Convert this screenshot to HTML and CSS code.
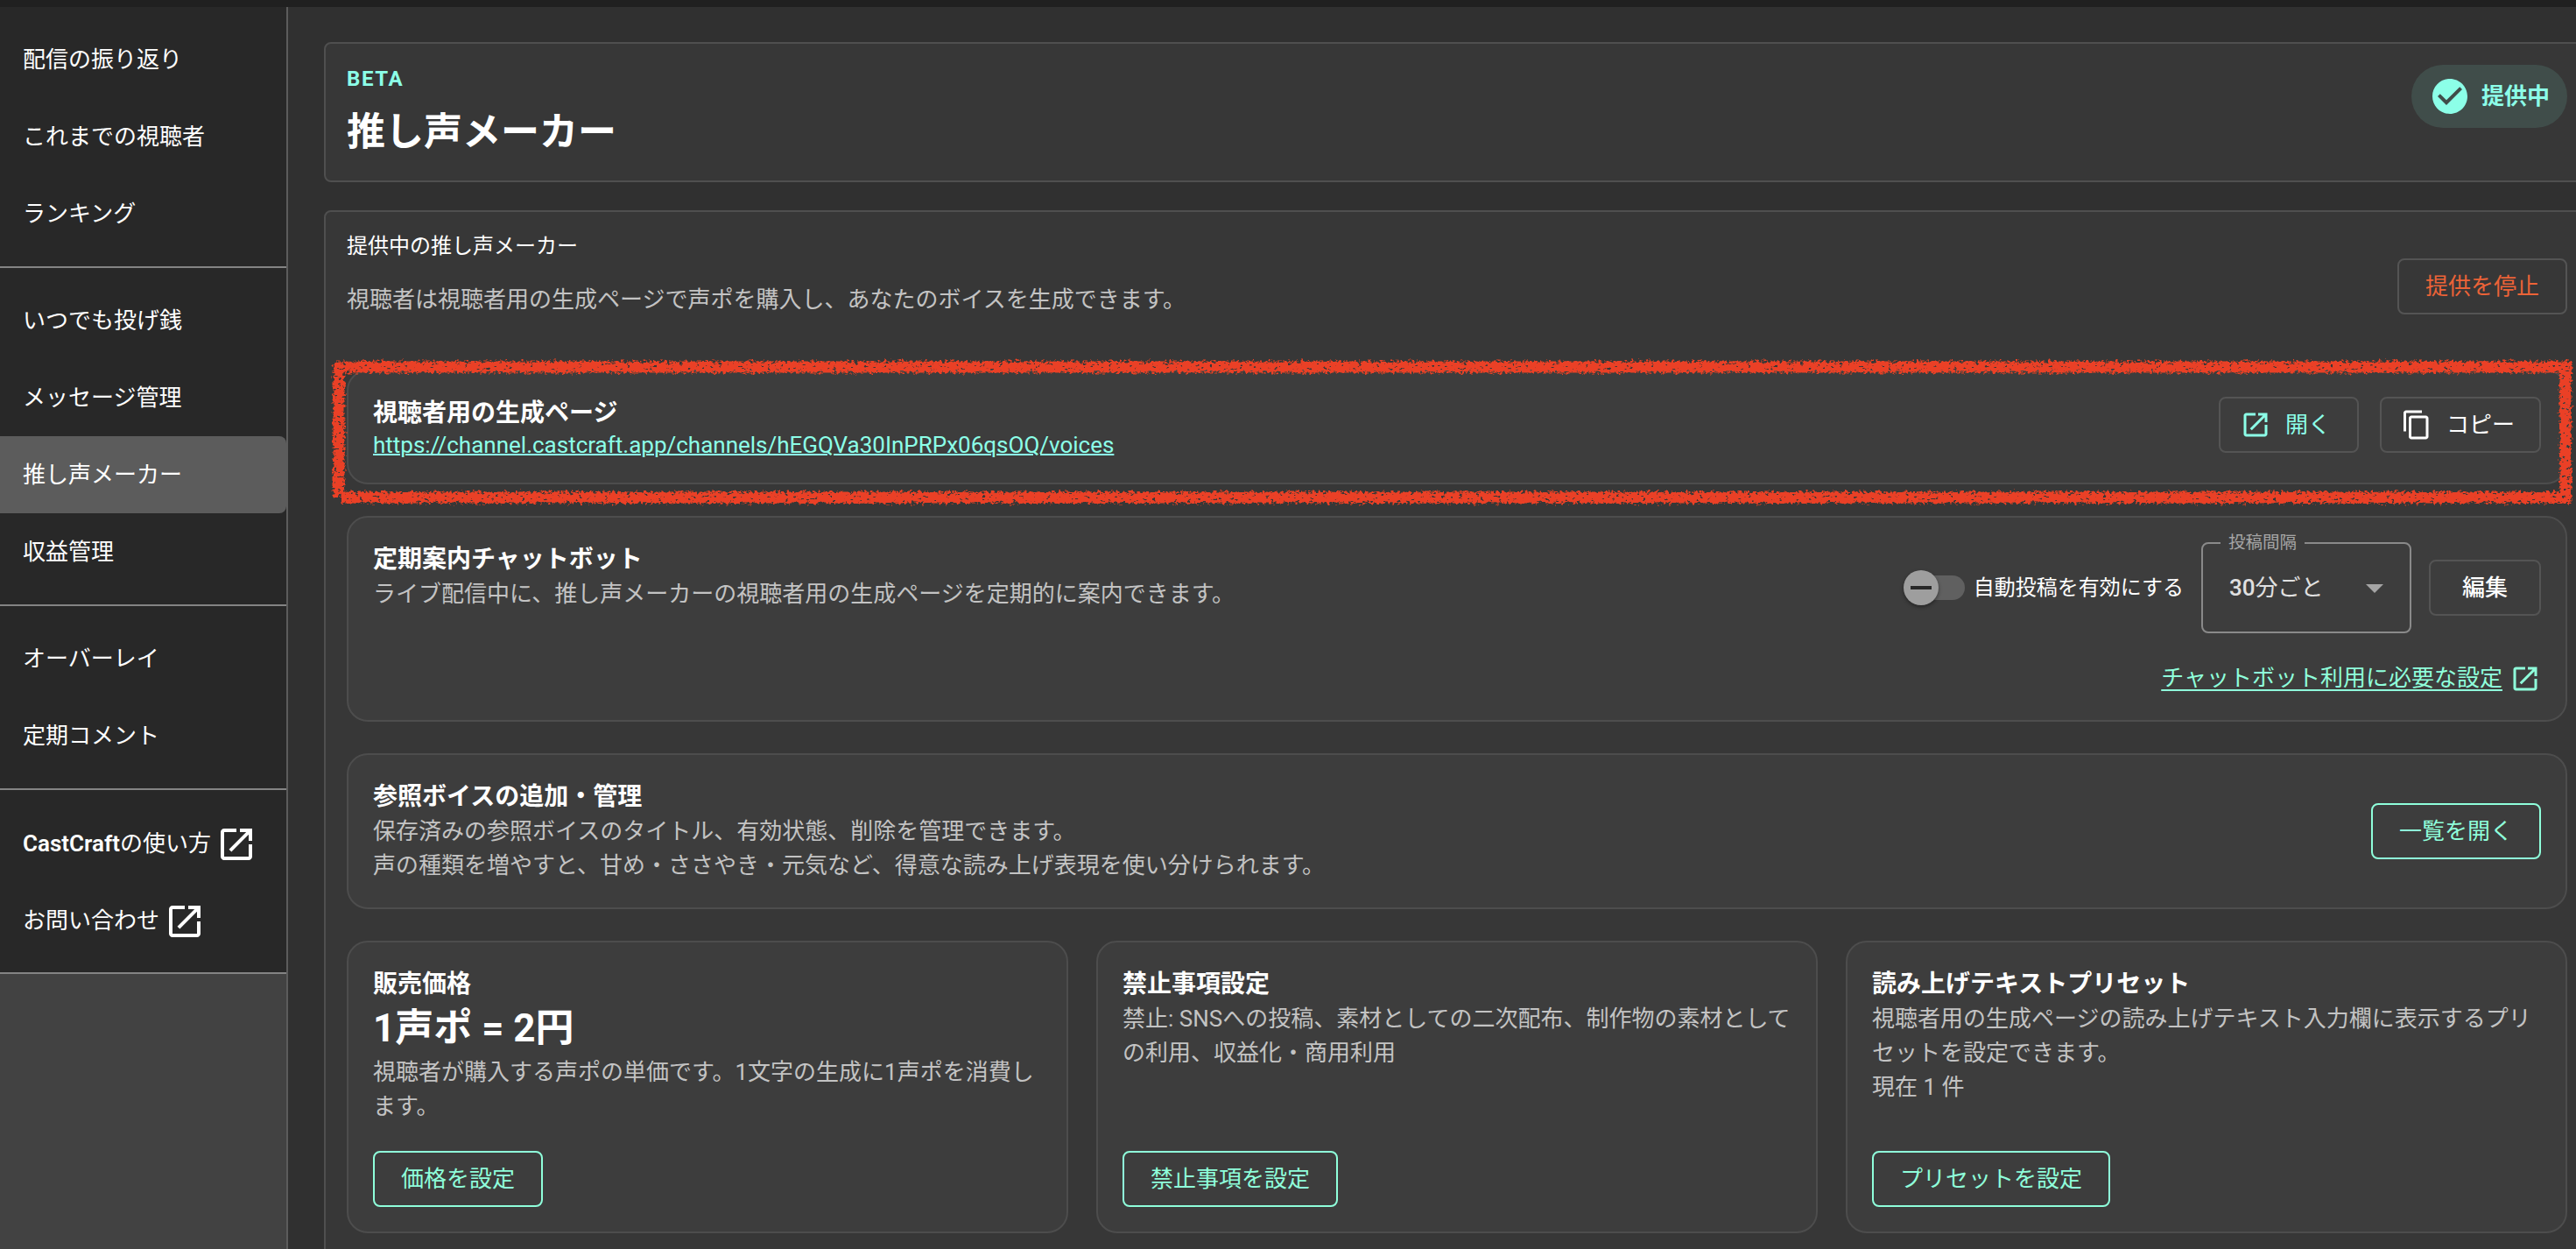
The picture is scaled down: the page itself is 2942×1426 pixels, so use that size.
FILE: index.html
```html
<!DOCTYPE html>
<html lang="ja">
<head>
<meta charset="UTF-8">
<title>推し声メーカー</title>
<meta name="viewport" content="width=device-width, initial-scale=1.0">
<link rel="stylesheet" href="styles.css">
</head>

<body>

<!-- ICONS -->
<svg width="0" height="0" class="defs">
    <symbol id="open" viewBox="0 0 24 24">
        <path d="M19 19H5V5h7V3H5c-1.11 0-2 .9-2 2v14c0 1.1.89 2 2 2h14c1.1 0 2-.9 2-2v-7h-2v7zM14 3v2h3.59l-9.83 9.83 1.41 1.41L19 6.41V10h2V3h-7z"/>
    </symbol>
    <symbol id="copy" viewBox="0 0 24 24">
        <path d="M16 1H4c-1.1 0-2 .9-2 2v14h2V3h12V1zm3 4H8c-1.1 0-2 .9-2 2v14c0 1.1.9 2 2 2h11c1.1 0 2-.9 2-2V7c0-1.1-.9-2-2-2zm0 16H8V7h11v14z"/>
    </symbol>
    <symbol id="check" viewBox="0 0 24 24">
        <path d="M12 2C6.48 2 2 6.48 2 12s4.48 10 10 10 10-4.48 10-10S17.52 2 12 2zm-2 15l-5-5 1.41-1.41L10 14.17l7.59-7.59L19 8l-9 9z"/>
    </symbol>
</svg>

<div class="topbar"></div>

<div class="layout">

<!-- SIDEBAR -->
<nav class="sidebar">
    <div class="group">
        <a class="item">配信の振り返り</a>
        <a class="item">これまでの視聴者</a>
        <a class="item">ランキング</a>
    </div>
    <div class="group">
        <a class="item">いつでも投げ銭</a>
        <a class="item">メッセージ管理</a>
        <a class="item active">推し声メーカー</a>
        <a class="item">収益管理</a>
    </div>
    <div class="group">
        <a class="item">オーバーレイ</a>
        <a class="item">定期コメント</a>
    </div>
    <div class="group links">
        <a class="item"><span><b>CastCraft</b>の使い方</span><svg class="icon-lg"><use href="#open"/></svg></a>
        <a class="item">お問い合わせ<svg class="icon-lg"><use href="#open"/></svg></a>
    </div>
</nav>

<main class="main">

<section class="panel title-panel">
    <div>
        <div class="beta">BETA</div>
        <h1 class="title">推し声メーカー</h1>
    </div>
    <div class="chip"><svg class="icon-lg"><use href="#check"/></svg>提供中</div>
</section>

<section class="panel">

    <div class="head">
        <div class="head-text">
            <h2 class="head-title">提供中の推し声メーカー</h2>
            <p class="desc">視聴者は視聴者用の生成ページで声ポを購入し、あなたのボイスを生成できます。</p>
        </div>
        <button class="btn danger">提供を停止</button>
    </div>

    <!-- URL -->
    <div class="card url-card">
        <div>
            <h3 class="card-title">視聴者用の生成ページ</h3>
            <a class="url">https://channel.castcraft.app/channels/hEGQVa30InPRPx06qsOQ/voices</a>
        </div>
        <div class="actions">
            <button class="btn with-icon mint"><svg class="icon"><use href="#open"/></svg>開く</button>
            <button class="btn with-icon copy"><svg class="icon"><use href="#copy"/></svg>コピー</button>
        </div>
        <svg class="marker" viewBox="0 0 2568 176">
            <filter id="crayon" x="0" y="0" width="2568" height="176" filterUnits="userSpaceOnUse">
                <feTurbulence type="fractalNoise" baseFrequency="0.3" numOctaves="2" seed="4" result="noise"/>
                <feDisplacementMap in="SourceGraphic" in2="noise" scale="9" xChannelSelector="R" yChannelSelector="G" result="rough"/>
                <feTurbulence type="fractalNoise" baseFrequency="0.2 0.35" numOctaves="2" seed="9"/>
                <feColorMatrix values="0 0 0 0 0  0 0 0 0 0  0 0 0 0 0  -12 0 0 0 8.8" result="holes"/>
                <feComposite in="rough" in2="holes" operator="in"/>
            </filter>
            <g filter="url(#crayon)">
                <path d="M6 13H2560M2554 10V168M14 162H2558M11 9V161"/>
            </g>
        </svg>
    </div>

    <!-- CHATBOT -->
    <div class="card bot-card">
        <div>
            <h3 class="card-title">定期案内チャットボット</h3>
            <p class="desc">ライブ配信中に、推し声メーカーの視聴者用の生成ページを定期的に案内できます。</p>
        </div>
        <div class="bot-side">
            <div class="controls">
                <div class="switch">
                    <span class="track"><span class="thumb"></span></span>
                    自動投稿を有効にする
                </div>
                <fieldset class="select">
                    <legend>投稿間隔</legend>
                    <div class="select-value"><span><b>30</b>分ごと</span><span class="arrow"></span></div>
                </fieldset>
                <button class="btn edit">編集</button>
            </div>
            <div class="help"><a>チャットボット利用に必要な設定</a><svg class="icon"><use href="#open"/></svg></div>
        </div>
    </div>

    <!-- VOICES -->
    <div class="card voice-card">
        <div>
            <h3 class="card-title">参照ボイスの追加・管理</h3>
            <p class="desc">保存済みの参照ボイスのタイトル、有効状態、削除を管理できます。<br>声の種類を増やすと、甘め・ささやき・元気など、得意な読み上げ表現を使い分けられます。</p>
        </div>
        <button class="btn primary">一覧を開く</button>
    </div>

    <div class="grid">
        <div class="card tile">
            <h3 class="card-title">販売価格</h3>
            <div class="price">1声ポ = 2円</div>
            <p class="desc">視聴者が購入する声ポの単価です。1文字の生成に1声ポを消費します。</p>
            <button class="btn primary">価格を設定</button>
        </div>
        <div class="card tile">
            <h3 class="card-title">禁止事項設定</h3>
            <p class="desc">禁止: SNSへの投稿、素材としての二次配布、制作物の素材としての利用、収益化・商用利用</p>
            <button class="btn primary">禁止事項を設定</button>
        </div>
        <div class="card tile">
            <h3 class="card-title">読み上げテキストプリセット</h3>
            <p class="desc">視聴者用の生成ページの読み上げテキスト入力欄に表示するプリセットを設定できます。<br>現在 1 件</p>
            <button class="btn primary">プリセットを設定</button>
        </div>
    </div>

</section>

</main>
</div>

</body>
</html>
```
FILE: styles.css
```css
* {
    box-sizing: border-box;
}

body {
    margin: 0;
    height: 1426px;
    overflow: hidden;
    font-family: Roboto, "Noto Sans CJK JP", sans-serif;
    font-size: 26px;
    line-height: 39px;
    color: #fff;
    background: #303030;
}

h1, h2, h3, p {
    margin: 0;
}

svg {
    fill: currentColor;
    flex-shrink: 0;
}

.defs {
    display: none;
}

.icon {
    width: 36px;
    height: 36px;
}

.icon-lg {
    width: 48px;
    height: 48px;
}

.topbar {
    height: 8px;
    background: #202020;
}

.layout {
    display: flex;
    height: 1418px;
}

/* SIDEBAR */
.sidebar {
    width: 329px;
    flex-shrink: 0;
    background: #424242;
    border-right: 2px solid #5c5c5c;
}

.group {
    padding: 16px 0;
    background: #282828;
    border-bottom: 2px solid #848484;
}

.item {
    display: flex;
    align-items: center;
    gap: 5px;
    height: 88px;
    padding-left: 26px;
}

.item b {
    font-weight: 600;
}

.links .item {
    padding-top: 3px;
}

.item.active {
    background: #5c5c5c;
    border-radius: 0 8px 8px 0;
}

/* MAIN */
.main {
    flex: 1;
    min-width: 0;
    overflow: hidden;
    display: flex;
    flex-direction: column;
    gap: 32px;
    padding: 40px 0 0 41px;
}

.panel {
    width: 2588px;
    flex-shrink: 0;
    padding: 24px;
    background: #373737;
    border: 2px solid #4f4f4f;
    border-radius: 8px;
}

.title-panel {
    display: flex;
    justify-content: space-between;
    align-items: flex-start;
    height: 160px;
}

.beta {
    padding-top: 1px;
    font-size: 24px;
    line-height: 31px;
    font-weight: 700;
    letter-spacing: 1.6px;
    color: #8cffe8;
}

.title {
    margin-top: 12px;
    font-size: 44px;
    line-height: 66px;
}

.chip {
    display: flex;
    align-items: center;
    gap: 12px;
    height: 72px;
    padding: 0 20px;
    border-radius: 36px;
    background: #404d4a;
    color: #8cffe8;
    font-weight: 700;
}

.head {
    display: flex;
    justify-content: space-between;
    align-items: center;
    height: 122px;
    margin-bottom: 34px;
}

.head-text {
    align-self: flex-start;
    padding-top: 1px;
}

.head-title {
    margin-bottom: 28px;
    font-size: 24px;
    line-height: 28px;
    font-weight: 400;
}

.desc {
    color: #c3c3c3;
}

/* BUTTONS */
.btn {
    display: flex;
    align-items: center;
    justify-content: center;
    flex-shrink: 0;
    height: 64px;
    padding: 1px 30px 0;
    border: 2px solid #545454;
    border-radius: 8px;
    background: transparent;
    color: #fff;
    font: inherit;
}

.btn.primary {
    color: #8fffdb;
    border-color: #8fffdb;
}

.btn.danger {
    color: #ec6337;
}

.btn.mint {
    color: #8cffe8;
}

.btn.with-icon {
    gap: 16px;
    padding: 0 30px 0 22px;
}

.btn.copy {
    padding-right: 28px;
}

.btn.edit {
    width: 128px;
    font-weight: 500;
}

/* CARDS */
.card {
    display: flex;
    justify-content: space-between;
    margin-bottom: 36px;
    padding: 28px;
    background: #3d3d3d;
    border: 2px solid #4d4d4d;
    border-radius: 24px;
}

.card-title {
    font-size: 28px;
    line-height: 40px;
    font-weight: 700;
}

.url-card {
    position: relative;
    height: 131px;
}

.url {
    display: block;
    padding-top: 1px;
    line-height: 31px;
    color: #8cffe8;
    text-decoration: underline;
    text-decoration-thickness: 2px;
}

.actions {
    display: flex;
    gap: 24px;
    padding-top: 1px;
}

/* red crayon frame drawn over the card */
.marker {
    position: absolute;
    left: -22px;
    top: -18px;
    width: 2568px;
    height: 176px;
    pointer-events: none;
}

.marker path {
    fill: none;
    stroke: #ea4025;
    stroke-width: 13;
}

/* CHATBOT */
.bot-side {
    display: flex;
    flex-direction: column;
    align-items: flex-end;
    gap: 32px;
}

.controls {
    display: flex;
    align-items: center;
    gap: 20px;
}

.switch {
    display: flex;
    align-items: center;
    gap: 10px;
    font-size: 24px;
}

.track {
    width: 62px;
    height: 28px;
    border-radius: 14px;
    background: #606060;
}

.thumb {
    display: flex;
    align-items: center;
    justify-content: center;
    width: 40px;
    height: 40px;
    margin: -6px 0 0 -8px;
    border-radius: 50%;
    background: #9e9e9e;
    box-shadow: 0 2px 4px rgba(0,0,0,0.4);
}

.thumb::after {
    content: "";
    width: 24px;
    height: 4px;
    background: #282828;
}

.select {
    width: 240px;
    height: 114px;
    margin: -10px 0 0;
    padding: 0 30px 0 20px;
    border: 2px solid #8a8a8a;
    border-radius: 8px;
}

.select legend {
    padding: 0 9px;
    font-size: 19.5px;
    line-height: 22px;
    color: #a5a5a5;
}

.select-value {
    display: flex;
    align-items: center;
    justify-content: space-between;
    padding: 21px 0 0 10px;
    color: #e0e0e0;
}

.select-value b {
    font-weight: 500;
}

.arrow {
    border: 10px solid transparent;
    border-top-color: #a5a5a5;
    border-bottom: 0;
}

.help {
    display: flex;
    align-items: center;
    gap: 8px;
    height: 41px;
    color: #8fffdb;
}

.help a {
    text-decoration: underline;
    text-decoration-thickness: 2px;
    text-underline-offset: 4px;
}

.bot-card {
    height: 235px;
}

.voice-card {
    align-items: center;
}

/* TILES */
.grid {
    display: grid;
    grid-template-columns: repeat(3, 1fr);
    gap: 32px;
}

.tile {
    flex-direction: column;
    justify-content: flex-start;
    align-items: flex-start;
    height: 334px;
    margin: 0;
}

.tile .btn {
    margin-top: auto;
}

.price {
    font-size: 44px;
    line-height: 61px;
    font-weight: 700;
}
```
